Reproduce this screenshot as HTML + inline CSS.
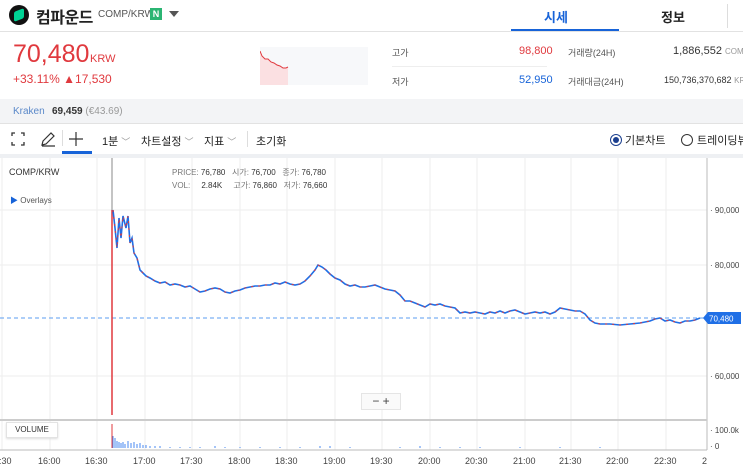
<!DOCTYPE html>
<html><head><meta charset="utf-8"><style>
*{margin:0;padding:0;box-sizing:border-box}
body{width:743px;height:469px;overflow:hidden;background:#fff;font-family:"Liberation Sans","Noto Sans CJK KR",sans-serif;position:relative;color:#222}
.a{position:absolute;white-space:nowrap}
</style></head><body>
<div class="a" style="left:9px;top:5px;width:20px;height:20px;border-radius:50%;background:#111"></div>
<div class="a" style="left:14px;top:10px;width:10px;height:10px;background:#00d395;transform:skewY(-20deg);border-radius:2px"></div>
<div class="a" style="left:36px;top:4px;font-size:16px;font-weight:bold;color:#222;letter-spacing:-0.5px">컴파운드</div>
<div class="a" style="left:98px;top:9px;font-size:10px;color:#555">COMP/KRW</div>
<div class="a" style="left:150px;top:8px;width:12px;height:12px;background:#2bb573;color:#fff;font-size:9px;font-weight:bold;text-align:center;line-height:12px">N</div>
<div class="a" style="left:169px;top:11px;width:0;height:0;border-left:5px solid transparent;border-right:5px solid transparent;border-top:6px solid #555"></div>
<div class="a" style="left:544px;top:7px;font-size:13px;font-weight:bold;color:#1763d8">시세</div>
<div class="a" style="left:511px;top:29px;width:108px;height:3px;background:#1763d8"></div>
<div class="a" style="left:661px;top:7px;font-size:13px;font-weight:bold;color:#222">정보</div>
<div class="a" style="left:727px;top:4px;width:1px;height:24px;background:#ddd"></div>
<div class="a" style="left:0;top:31px;width:743px;height:1px;background:#e2e2e2"></div>
<div class="a" style="left:13px;top:40px;font-size:25px;color:#e0393e">70,480</div>
<div class="a" style="left:90px;top:53px;font-size:11px;color:#e0393e">KRW</div>
<div class="a" style="left:13px;top:72px;font-size:12px;color:#e0393e">+33.11% ▲17,530</div>
<div class="a" style="left:260px;top:47px;width:108px;height:38px;background:#f7f8fa"></div>
<svg class="a" style="left:260px;top:47px" width="30" height="38"><path d="M0 4 L2 9 L5 12 L8 12 L11 15 L14 16 L17 18 L20 19 L23 21 L26 21 L28 20 L28 38 L0 38Z" fill="#fbe0e2"/><path d="M0 4 L2 9 L5 12 L8 12 L11 15 L14 16 L17 18 L20 19 L23 21 L26 21 L28 20" fill="none" stroke="#e0393e" stroke-width="1"/></svg>
<div class="a" style="left:392px;top:46px;font-size:9px;color:#555">고가</div>
<div class="a" style="left:519px;top:45px;font-size:11px;color:#e0393e">98,800</div>
<div class="a" style="left:392px;top:66px;width:155px;height:1px;background:#eee"></div>
<div class="a" style="left:392px;top:75px;font-size:9px;color:#555">저가</div>
<div class="a" style="left:519px;top:74px;font-size:11px;color:#1763d8">52,950</div>
<div class="a" style="left:568px;top:46px;font-size:9px;color:#555">거래량(24H)</div>
<div class="a" style="left:673px;top:45px;font-size:11px;color:#333">1,886,552 <span style="font-size:8px;color:#999">COMP</span></div>
<div class="a" style="left:568px;top:75px;font-size:9px;color:#555">거래대금(24H)</div>
<div class="a" style="left:664px;top:75px;font-size:9px;color:#333">150,736,370,682 <span style="font-size:8px;color:#999">KRW</span></div>
<div class="a" style="left:0;top:99px;width:743px;height:25px;background:#f3f4f6;border-bottom:1px solid #e2e2e2"></div>
<div class="a" style="left:13px;top:106px;font-size:10px;color:#5a88c9">Kraken</div>
<div class="a" style="left:52px;top:106px;font-size:10px;color:#333;font-weight:bold">69,459 <span style="font-weight:normal;color:#999">(€43.69)</span></div>
<svg class="a" style="left:11px;top:132px" width="14" height="14" fill="none" stroke="#333" stroke-width="1.3"><path d="M1 4V1H4M10 1H13V4M13 10V13H10M4 13H1V10"/></svg>
<svg class="a" style="left:40px;top:131px" width="16" height="16" fill="none" stroke="#333" stroke-width="1.2"><path d="M2 14L3 10L11 2L14 5L6 13L2 14ZM2 15H15"/></svg>
<div class="a" style="left:62px;top:130px;width:1px;height:16px;background:#ddd"></div>
<svg class="a" style="left:68px;top:131px" width="16" height="16" stroke="#333" stroke-width="1.2"><path d="M8 1V15M1 8H15"/></svg>
<div class="a" style="left:62px;top:151px;width:30px;height:3px;background:#1763d8"></div>
<div class="a" style="left:102px;top:133px;font-size:11px;color:#222">1분 <span style="color:#999;font-size:9px">﹀</span></div>
<div class="a" style="left:141px;top:133px;font-size:11px;color:#222">차트설정 <span style="color:#999;font-size:9px">﹀</span></div>
<div class="a" style="left:204px;top:133px;font-size:11px;color:#222">지표 <span style="color:#999;font-size:9px">﹀</span></div>
<div class="a" style="left:247px;top:131px;width:1px;height:16px;background:#ddd"></div>
<div class="a" style="left:256px;top:133px;font-size:11px;color:#222">초기화</div>
<div class="a" style="left:610px;top:134px;width:12px;height:12px;border-radius:50%;border:1.5px solid #1b3f8f"></div>
<div class="a" style="left:613px;top:137px;width:6px;height:6px;border-radius:50%;background:#1b3f8f"></div>
<div class="a" style="left:625px;top:132px;font-size:11px;color:#222">기본차트</div>
<div class="a" style="left:681px;top:134px;width:12px;height:12px;border-radius:50%;border:1px solid #333"></div>
<div class="a" style="left:697px;top:132px;font-size:11px;color:#222">트레이딩뷰</div>
<div class="a" style="left:0;top:154px;width:743px;height:4px;background:#eef0f3"></div>
<svg class="a" style="left:0;top:158px" width="743" height="311">
<g stroke="#eee" stroke-width="1">
<path d="M2 0V292M50 0V292M97 0V292M145 0V292M192 0V292M240 0V292M287 0V292M335 0V292M382 0V292M430 0V292M477 0V292M525 0V292M571 0V292M618 0V292M666 0V292"/>
<path d="M0 52H707M0 107H707M0 218H707"/>
</g>
<line x1="0" y1="160" x2="707" y2="160" stroke="#5b9ef0" stroke-dasharray="4,3"/>
<line x1="707" y1="0" x2="707" y2="292" stroke="#bbb"/>
<line x1="0" y1="262" x2="707" y2="262" stroke="#ccc" stroke-width="2"/>
<line x1="0" y1="292" x2="707" y2="292" stroke="#bbb"/>
<line x1="112" y1="0" x2="112" y2="52" stroke="#888"/>
<line x1="112" y1="52" x2="112" y2="257" stroke="#e0393e" stroke-width="1.5"/>
<polyline fill="none" stroke="#1f6fe6" stroke-width="1.6" points="113,52 115,70 117,90 119,60 121,80 123,58 126,70 128,58 130,85 132,80 134,95 137,100 140,112 143,115 146,118 150,120 155,123 160,125 165,124 170,127 175,126 180,127 185,129 190,128 195,131 200,134 205,133 210,131 215,130 220,131 225,134 230,135 235,133 240,132 245,130 250,129 255,128 260,128 265,127 270,127 275,125 280,126 285,124 290,126 295,127 300,126 305,123 310,118 315,112 318,107 322,109 326,112 330,116 335,120 340,122 345,126 350,128 355,127 360,129 365,129 370,128 375,127 380,129 385,131 390,132 395,133 400,137 405,143 410,143 415,145 420,147 425,149 430,146 435,147 440,146 445,148 450,149 455,150 460,155 465,154 470,155 475,154 480,155 485,156 490,154 495,155 500,153 505,155 510,153 515,152 520,154 525,156 530,155 535,154 540,155 545,154 550,156 555,154 560,150 565,151 570,152 575,153 580,153 585,156 590,162 595,165 600,166 610,166 620,167 630,166 640,165 650,163 655,161 660,160 665,163 670,162 675,164 680,165 685,163 690,163 695,162 700,160"/>
<polyline fill="none" stroke="#e0393e" stroke-width="1" stroke-dasharray="2,5" points="113,52 115,70 117,90 119,60 121,80 123,58 126,70 128,58 130,85 132,80 134,95 137,100 140,112 143,115 146,118 150,120 155,123 160,125 165,124 170,127 175,126 180,127 185,129 190,128 195,131 200,134 205,133 210,131 215,130 220,131 225,134 230,135 235,133 240,132 245,130 250,129 255,128 260,128 265,127 270,127 275,125 280,126 285,124 290,126 295,127 300,126 305,123 310,118 315,112 318,107 322,109 326,112 330,116 335,120 340,122 345,126 350,128 355,127 360,129 365,129 370,128 375,127 380,129 385,131 390,132 395,133 400,137 405,143 410,143 415,145 420,147 425,149 430,146 435,147 440,146 445,148 450,149 455,150 460,155 465,154 470,155 475,154 480,155 485,156 490,154 495,155 500,153 505,155 510,153 515,152 520,154 525,156 530,155 535,154 540,155 545,154 550,156 555,154 560,150 565,151 570,152 575,153 580,153 585,156 590,162 595,165 600,166 610,166 620,167 630,166 640,165 650,163 655,161 660,160 665,163 670,162 675,164 680,165 685,163 690,163 695,162 700,160"/>
<line x1="112" y1="266" x2="112" y2="290" stroke="#e0393e"/>
<g stroke="#4a8af0" stroke-width="1">
<path d="M113 278V290M115 280V290M117 283V290M119 284V290M121 285V290M123 284V290M125 286V290M128 283V290M131 285V290M134 284V290M137 286V290M140 285V290M143 287V290M146 287V290M150 288V290M155 288V290M160 288V290M170 289V290M180 289V290M190 289V290M200 289V290M215 288V290M225 289V290M240 289V290M260 289V290M280 289V290M300 289V290M320 288V290M330 288V290M350 289V290M400 289V290M420 288V290M440 289V290M460 289V290M480 289V290M520 289V290M560 289V290M600 289V290"/>
</g>
<text x="710" y="55" font-size="8" fill="#444">· 90,000</text>
<text x="710" y="110" font-size="8" fill="#444">· 80,000</text>
<text x="710" y="221" font-size="8" fill="#444">· 60,000</text>
<text x="710" y="275" font-size="8" fill="#444">· 100.0k</text>
<text x="710" y="291" font-size="8" fill="#444">· 0</text>
<path d="M703 160L708 154H741V166H708Z" fill="#1f6fe6"/>
<text x="709" y="163.5" font-size="8" fill="#fff">70,480</text>
<g font-size="9" fill="#444">
<text x="-6" y="306">6:30</text><text x="38" y="306">16:00</text><text x="85" y="306">16:30</text><text x="133" y="306">17:00</text><text x="180" y="306">17:30</text><text x="228" y="306">18:00</text><text x="275" y="306">18:30</text><text x="323" y="306">19:00</text><text x="370" y="306">19:30</text><text x="418" y="306">20:00</text><text x="465" y="306">20:30</text><text x="513" y="306">21:00</text><text x="559" y="306">21:30</text><text x="606" y="306">22:00</text><text x="654" y="306">22:30</text><text x="702" y="306">2</text>
</g>
</svg>
<div class="a" style="left:9px;top:167px;font-size:9px;color:#333">COMP/KRW</div>
<div class="a" style="left:10px;top:195px;font-size:8px;color:#555"><span style="color:#1763d8">▶</span> Overlays</div>
<div class="a" style="left:172px;top:166px;font-size:8px;color:#777;line-height:13px">PRICE: <span style="color:#333">76,780</span>&nbsp;&nbsp; 시가: <span style="color:#333">76,700</span>&nbsp;&nbsp; 종가: <span style="color:#333">76,780</span><br>VOL:&nbsp;&nbsp;&nbsp;&nbsp; <span style="color:#333">2.84K</span>&nbsp;&nbsp;&nbsp;&nbsp; 고가: <span style="color:#333">76,860</span>&nbsp;&nbsp; 저가: <span style="color:#333">76,660</span></div>
<div class="a" style="left:361px;top:393px;width:40px;height:17px;background:#fafafa;border:1px solid #e5e5e5;font-size:12px;color:#444;text-align:center;line-height:15px">− +</div>
<div class="a" style="left:6px;top:422px;width:52px;height:16px;border:1px solid #e3e3e3;box-shadow:0 1px 2px #ddd;font-size:8px;color:#333;text-align:center;line-height:14px;background:#fff">VOLUME</div>
</body></html>
